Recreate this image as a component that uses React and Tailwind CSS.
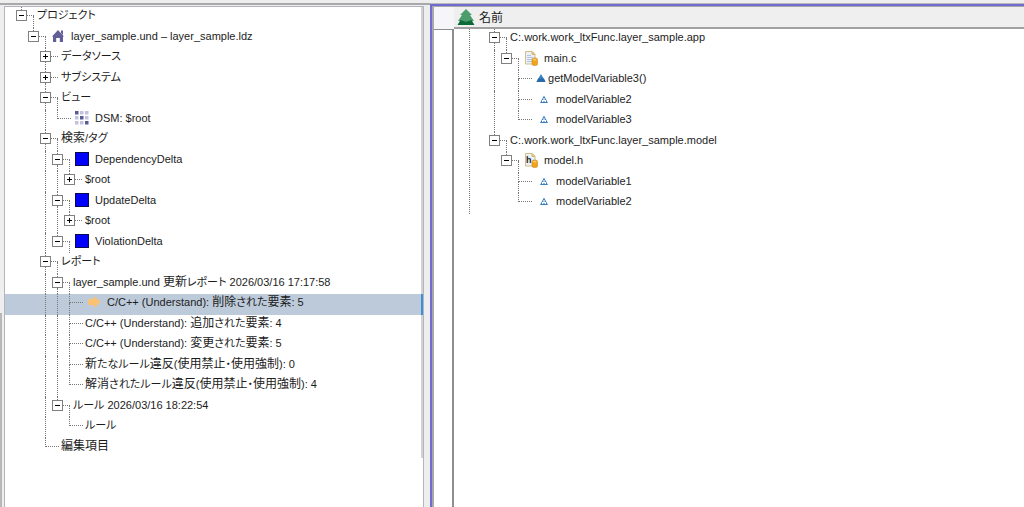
import React, { useState } from 'react';
import clsx from 'clsx';

const HomeIcon = () => (
  <svg viewBox="0 0 14 14" className="h-3.5 w-3.5" aria-hidden="true">
    <path d="M7 1 L13 7.5 H12 V13 H8.8 V9 H5.2 V13 H2 V7.5 H1 Z" fill="#615f96" />
    <path d="M10 1.5 H12 V6 L10 4 Z" fill="#615f96" />
  </svg>
);

const MatrixIcon = () => (
  <svg viewBox="0 0 14 14" className="h-3.5 w-3.5" aria-hidden="true">
    {[0, 1, 2].map((row) =>
      [0, 1, 2].map((col) => (
        <rect
          key={`${row}-${col}`}
          x={col * 5}
          y={row * 5}
          width="3.5"
          height="3.5"
          fill={row === col ? '#5a5896' : '#c3c2dc'}
        />
      ))
    )}
  </svg>
);

const SquareIcon = () => <span className="block h-3.5 w-3.5 border border-[#0a0a50] bg-[#0000ff]" />;

const ArrowIcon = () => (
  <svg viewBox="0 0 14 14" className="h-3.5 w-3.5" aria-hidden="true">
    <path d="M1 4 H7 V1 L13.5 7 L7 13 V10 H1 Z" fill="#fbc274" />
  </svg>
);

const FileIcon = ({ letter }) => (
  <svg viewBox="0 0 14 16" className="h-4 w-3.5" aria-hidden="true">
    <path d="M1.5 1.5 H8 L11 4.5 V14 H1.5 Z" fill="#e9f1fa" stroke="#d6bd84" />
    <path d="M8 1.5 V4.5 H11 Z" fill="#e9c987" stroke="#d9b877" />
    {letter ? (
      <text x="2" y="11" fontSize="9" fontWeight="700" fontFamily="Liberation Sans, sans-serif" fill="#1d2433">
        {letter}
      </text>
    ) : (
      <path d="M3 5.5 H7 M3 7.5 H9 M3 9.5 H8 M3 11.5 H8" stroke="#b3c6e0" />
    )}
    <rect x="8" y="8" width="5.6" height="7.6" rx="2" fill="#f2a31c" stroke="#c98a20" strokeWidth="0.6" />
    <ellipse cx="10.8" cy="9.6" rx="1.8" ry="0.9" fill="#fbd06a" />
  </svg>
);

const FunctionIcon = () => (
  <svg viewBox="0 0 10 10" className="h-2.5 w-2.5" aria-hidden="true">
    <path d="M5 1 L8 6 H2 Z" fill="#3b82c0" />
    <path d="M2 5.5 H8 L9.6 9 H0.4 Z" fill="#2a6aaa" />
  </svg>
);

const VariableIcon = () => (
  <svg viewBox="0 0 8 8" className="h-2 w-2" aria-hidden="true">
    <path d="M4 0.5 L8 8 H0 Z" fill="#3a7fc0" />
    <path d="M3.4 3 H4.6 V5 H6 V7 H4.6 V6 H3.4 V7 H2 V5 H3.4 Z" fill="#ffffff" />
  </svg>
);

const TreeTopIcon = () => (
  <svg viewBox="0 0 18 18" className="h-[18px] w-[18px]" aria-hidden="true">
    <path d="M9 1 L15 7 H13 L17 13 H1 L5 7 H3 Z" fill="#4c9c6c" />
    <path d="M3.5 12 Q9 14.5 14.5 12 L17.5 17 H0.5 Z" fill="#0b6b38" />
  </svg>
);

const ICONS = {
  home: <HomeIcon />,
  matrix: <MatrixIcon />,
  square: <SquareIcon />,
  arrow: <ArrowIcon />,
  cFile: <FileIcon />,
  hFile: <FileIcon letter="h" />,
  func: <FunctionIcon />,
  variable: <VariableIcon />,
};

const PROJECT_TREE = [
  {
    label: 'プロジェクト',
    children: [
      {
        label: 'layer_sample.und – layer_sample.ldz',
        icon: 'home',
        children: [
          { label: 'データソース', closed: true },
          { label: 'サブシステム', closed: true },
          { label: 'ビュー', children: [{ label: 'DSM: $root', icon: 'matrix' }] },
          {
            label: '検索/タグ',
            children: [
              { label: 'DependencyDelta', icon: 'square', children: [{ label: '$root', closed: true }] },
              { label: 'UpdateDelta', icon: 'square', children: [{ label: '$root', closed: true }] },
              { label: 'ViolationDelta', icon: 'square', children: [] },
            ],
          },
          {
            label: 'レポート',
            children: [
              {
                label: 'layer_sample.und 更新レポート 2026/03/16 17:17:58',
                children: [
                  { label: 'C/C++ (Understand): 削除された要素: 5', icon: 'arrow', selected: true },
                  { label: 'C/C++ (Understand): 追加された要素: 4' },
                  { label: 'C/C++ (Understand): 変更された要素: 5' },
                  { label: '新たなルール違反(使用禁止・使用強制): 0' },
                  { label: '解消されたルール違反(使用禁止・使用強制): 4' },
                ],
              },
              { label: 'ルール 2026/03/16 18:22:54', children: [{ label: 'ルール' }] },
            ],
          },
          { label: '編集項目' },
        ],
      },
    ],
  },
];

const ELEMENT_TREE = [
  {
    label: 'C:.work.work_ltxFunc.layer_sample.app',
    children: [
      {
        label: 'main.c',
        icon: 'cFile',
        children: [
          { label: 'getModelVariable3()', icon: 'func' },
          { label: 'modelVariable2', icon: 'variable' },
          { label: 'modelVariable3', icon: 'variable' },
        ],
      },
    ],
  },
  {
    label: 'C:.work.work_ltxFunc.layer_sample.model',
    children: [
      {
        label: 'model.h',
        icon: 'hFile',
        children: [
          { label: 'modelVariable1', icon: 'variable' },
          { label: 'modelVariable2', icon: 'variable' },
        ],
      },
    ],
  },
];

// Turns the nested tree into visible rows; guides[i] says whether level i still has siblings below.
const flatten = (nodes, toggled, guides = [], path = '') =>
  nodes.flatMap((node, index) => {
    const id = `${path}/${index}`;
    const last = index === nodes.length - 1;
    const branch = Boolean(node.children || node.closed);
    const open = branch && Boolean(node.closed) === toggled.includes(id);
    const row = { ...node, id, last, branch, open, guides };
    return [row, ...(open ? flatten(node.children || [], toggled, [...guides, !last], id) : [])];
  });

const DOTTED = 'border-dotted border-[#777777]';

// Kanji are set one size up so that dense characters stay legible.
const Label = ({ text }) =>
  text.split(/([\u4e00-\u9fff]+)/).map((part, index) =>
    index % 2 ? (
      <span key={index} className="text-[12px]">
        {part}
      </span>
    ) : (
      part
    )
  );

const TreeRow = ({ row, onToggle, edge }) => (
  <li
    role="treeitem"
    aria-level={row.guides.length + 1}
    aria-expanded={row.branch ? row.open : undefined}
    aria-selected={Boolean(row.selected)}
    className={clsx(
      'flex odd:h-[21px] even:h-5',
      edge && 'border-r-2 pl-2.5',
      edge && (row.selected ? 'border-[#3d8fdd]' : 'border-[#d2d2d2]'),
      row.selected && 'bg-[#bdcad9]'
    )}
  >
    {row.guides.map((line, level) => (
      <span key={level} className="flex w-3 shrink-0 pl-1.5">
        {line && <span className={clsx('border-l', DOTTED)} />}
      </span>
    ))}

    {row.branch ? (
      <>
        <span className="flex w-3 shrink-0 flex-col pl-px">
          <span className={clsx('ml-[5px] h-[3px] border-l', DOTTED)} />
          <button
            type="button"
            aria-label={row.label}
            onClick={() => onToggle(row.id)}
            className="flex h-[11px] w-[11px] shrink-0 items-center justify-center border border-[#808080] bg-white"
          >
            <svg viewBox="0 0 5 5" className="h-[5px] w-[5px]" aria-hidden="true">
              <path d={row.open ? 'M0 2.5 H5' : 'M0 2.5 H5 M2.5 0 V5'} stroke="#000000" />
            </svg>
          </button>
          {!row.last && <span className={clsx('ml-[5px] flex-1 border-l', DOTTED)} />}
        </span>
        <span className="flex w-2.5 shrink-0 flex-col pt-2">
          <span className={clsx('w-[7px] border-t', DOTTED)} />
          {row.open && <span className={clsx('ml-1.5 flex-1 border-l', DOTTED)} />}
        </span>
      </>
    ) : (
      <span className="flex w-[22px] shrink-0 flex-col pl-1.5">
        <span className={clsx('h-[9px] w-3.5 border-b border-l', DOTTED)} />
        {!row.last && <span className={clsx('flex-1 border-l', DOTTED)} />}
      </span>
    )}

    {row.icon && (
      <span
        className={clsx(
          'flex h-4 shrink-0 items-center',
          row.icon === 'func' ? 'w-3.5' : 'w-[22px]',
          row.icon === 'variable' ? 'pl-1.5' : 'pl-0.5'
        )}
      >
        {ICONS[row.icon]}
      </span>
    )}
    <span className="h-4 leading-4 whitespace-nowrap">
      <Label text={row.label} />
    </span>
  </li>
);

const Tree = ({ nodes, label, edge = false }) => {
  const [toggled, setToggled] = useState([]);

  const handleToggle = (id) => {
    setToggled((ids) => (ids.includes(id) ? ids.filter((item) => item !== id) : [...ids, id]));
  };

  return (
    <ul role="tree" aria-label={label}>
      {flatten(nodes, toggled).map((row) => (
        <TreeRow key={row.id} row={row} onToggle={handleToggle} edge={edge} />
      ))}
    </ul>
  );
};

const App = () => (
  <div className="flex min-h-screen flex-col bg-[#eeeeee] font-['Liberation_Sans','Noto_Sans_CJK_JP',sans-serif] text-[11px] text-[#1c1c1c] [font-feature-settings:'palt']">
    <div className="h-[3px]" />
    <div className="flex flex-1">
      <div className="flex w-[42%] shrink-0 border-t-2 border-[#a9a9a9]">
        <div className="flex w-1 flex-col pt-[308px]">
          <div className="w-0.5 flex-1 bg-[#b8b8b8]" />
        </div>
        <section className="mt-px flex-1 border-x border-t border-[#b4b4bc] bg-white">
          <Tree nodes={PROJECT_TREE} label="プロジェクト" edge />
        </section>
        <div className="w-1.5" />
      </div>

      <div className="flex flex-1 border-t border-[#b9b9b9]">
        <section className="flex flex-1 border-t-2 border-l-2 border-[#6f6bd0] bg-white">
          <div className="flex flex-1 border-t border-l-2 border-[#a8a8ac]">
            <div className="flex w-5 shrink-0 flex-col">
              <div className="h-[23px] border-b border-[#8c8c8c] bg-[#f6f6f9]" />
              <div className="flex-1 border-r-2 border-[#8e8e8e]" />
            </div>
            <div className="flex-1">
              <header className="flex h-[22px] items-center gap-1 border-b-2 border-[#a0a0a0] bg-[#efefef] pl-[3px]">
                <TreeTopIcon />
                <h1 className="pt-0.5 text-[12px] leading-4">名前</h1>
              </header>
              <div className="pl-[15px]">
                <div className={clsx('border-l pl-[18px]', DOTTED)}>
                  <Tree nodes={ELEMENT_TREE} label="名前" />
                </div>
              </div>
            </div>
          </div>
        </section>
      </div>
    </div>
  </div>
);

export default App;
